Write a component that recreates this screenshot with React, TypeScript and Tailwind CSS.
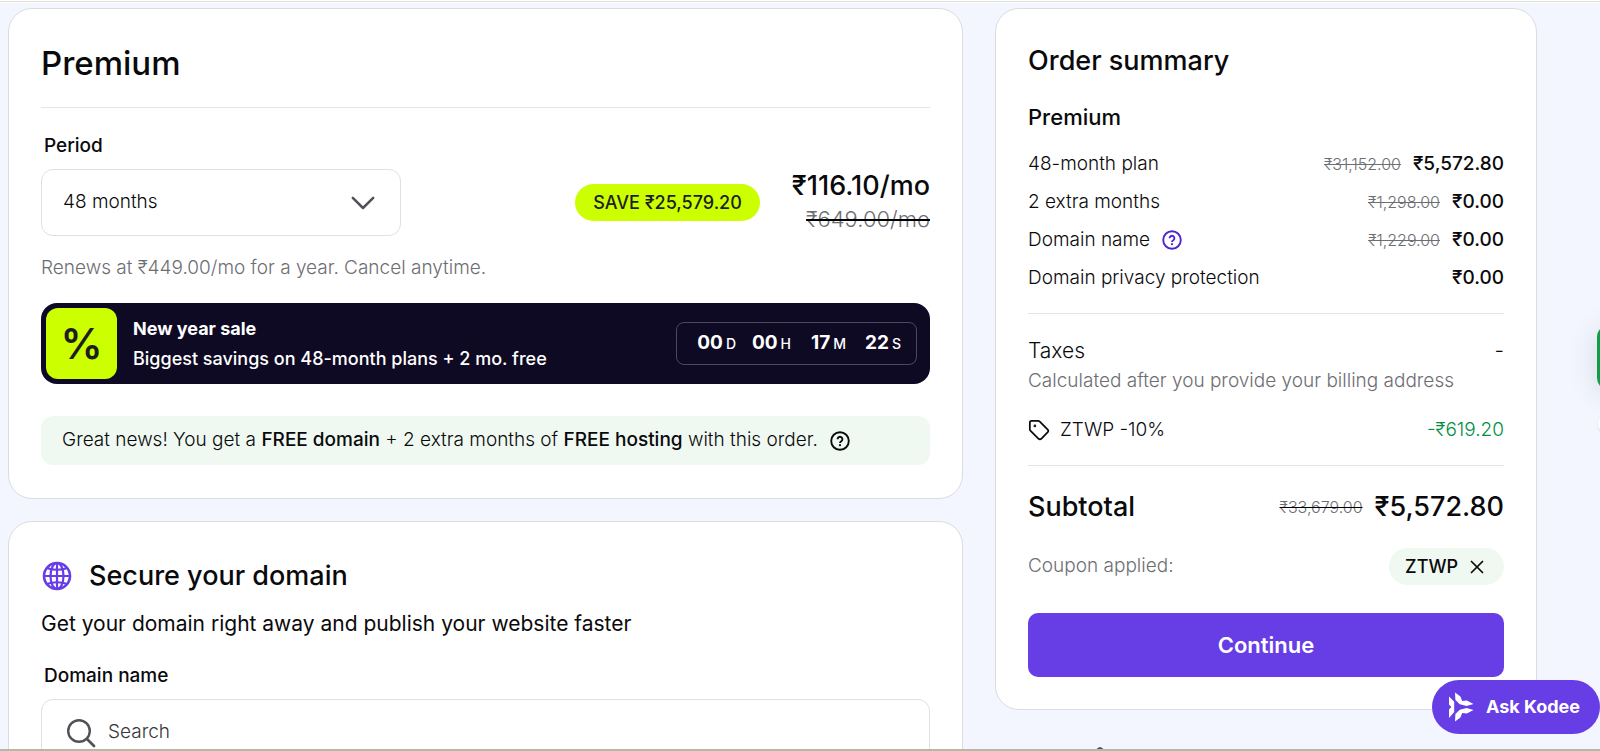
import { ReactNode } from 'react'
import { ShieldCheck, Tag, X } from 'lucide-react'

type Line = { name: string; old?: string; price: string; help?: boolean }

const lines: Line[] = [
    { name: '48-month plan', old: '₹31,152.00', price: '₹5,572.80' },
    { name: '2 extra months', old: '₹1,298.00', price: '₹0.00' },
    { name: 'Domain name', old: '₹1,229.00', price: '₹0.00', help: true },
    { name: 'Domain privacy protection', price: '₹0.00' },
]

const timer = [
    { value: '00', unit: 'D' },
    { value: '00', unit: 'H' },
    { value: '17', unit: 'M' },
    { value: '22', unit: 'S' },
]

function Card({ children, className = '' }: { children: ReactNode; className?: string }) {
    return (
        <section className={`rounded-3xl border border-[#dadce0] bg-white px-8 ${className}`}>
            {children}
        </section>
    )
}

function HelpIcon({ className = '' }: { className?: string }) {
    return (
        <svg viewBox="0 0 20 20" fill="none" stroke="currentColor" strokeWidth="1.9" className={`size-5 ${className}`}>
            <circle cx="10" cy="10" r="8.8" />
            <path d="M7.6 8.2a2.4 2.4 0 1 1 3.7 2c-.8.5-1.3.9-1.3 1.7" />
            <circle cx="10" cy="14.2" r="1.1" fill="currentColor" stroke="none" />
        </svg>
    )
}

function GlobeIcon() {
    return (
        <svg viewBox="0 0 32 32" fill="none" stroke="currentColor" strokeWidth="2.6" className="size-8 text-[#673de6]">
            <circle cx="16" cy="16" r="13" />
            <ellipse cx="16" cy="16" rx="6.5" ry="13" strokeWidth="2.2" />
            <path d="M16 3v26M3 16h26" strokeWidth="2.2" />
            <path d="M6 8c5 2.4 15 2.4 20 0M6 24c5-2.4 15-2.4 20 0" strokeWidth="2" />
        </svg>
    )
}

function ChevronIcon() {
    return (
        <svg viewBox="0 0 24 14" fill="none" stroke="currentColor" strokeWidth="2.5" strokeLinecap="round" strokeLinejoin="round" className="pointer-events-none absolute top-[27px] right-[26px] h-[14px] w-6 text-[#505259]">
            <path d="M1.8 1.8 12 12 22.2 1.8" />
        </svg>
    )
}

function SearchIcon() {
    return (
        <svg viewBox="0 0 30 30" fill="none" stroke="currentColor" strokeWidth="2.4" strokeLinecap="round" className="size-[30px] shrink-0 text-[#505259]">
            <circle cx="13" cy="13" r="10.8" />
            <path d="M21 21l7 7" strokeWidth="2.8" />
        </svg>
    )
}

function KodeeLogo() {
    return (
        <svg viewBox="0 0 26 30" fill="currentColor" className="h-[30px] w-[26px] shrink-0">
            <path d="M1 4.5 6.2 9.8V20L1 26V17.5L3.4 15 1 12.5z" />
            <path d="M7 .5 12.4 4.6 14.2 9 18.8 8.6 25.5 12 18.6 14 11.8 12.2 7.4 8z" />
            <path d="M7 29.5 12.4 25.4 14.2 21 18.8 21.4 25.5 18 18.6 16 11.8 17.8 7.4 22z" />
        </svg>
    )
}

function PromoBanner() {
    return (
        <div className="mt-[21px] flex items-center rounded-2xl bg-[#0f0a24] p-[5px] pr-[13px] text-white">
            <div className="flex size-[71px] shrink-0 items-center justify-center rounded-xl bg-[#ccff00] text-[42px] font-semibold text-[#1d1e20]">
                %
            </div>
            <div className="ml-4 text-lg leading-[30px]">
                <p className="font-bold">New year sale</p>
                <p className="font-medium">Biggest savings on 48-month plans + 2 mo. free</p>
            </div>
            <div className="ml-auto flex h-[43px] items-center rounded-lg border border-[#4b4860] pr-[15px] pl-1">
                {timer.map((t) => (
                    <div key={t.unit} className="flex w-[55px] items-baseline justify-end gap-[3px]">
                        <span className="text-[19px] font-bold">{t.value}</span>
                        <span className="text-sm font-medium">{t.unit}</span>
                    </div>
                ))}
            </div>
        </div>
    )
}

function PlanCard() {
    return (
        <Card className="pt-[34px] pb-[33px]">
            <h1 className="text-[33px] leading-10 font-medium">Premium</h1>
            <hr className="mt-6 border-[#e4e5e9]" />
            <label htmlFor="period" className="mt-6 block pl-[3px] text-[19px] leading-7 font-medium">Period</label>
            <div className="mt-[9px] flex items-center">
                <div className="relative w-[360px]">
                    <select id="period" className="h-[67px] w-full appearance-none rounded-xl border border-[#dfe0e4] bg-white px-[21px] text-[19px] font-light">
                        <option>48 months</option>
                        <option>24 months</option>
                        <option>12 months</option>
                        <option>1 month</option>
                    </select>
                    <ChevronIcon />
                </div>
                <span className="ml-auto rounded-full bg-[#ccff00] px-[18px] text-lg leading-[37px] font-medium text-[#1d1e20]">SAVE ₹25,579.20</span>
                <div className="ml-8 text-right">
                    <p className="text-[27px] leading-[34px] font-medium">₹116.10/mo</p>
                    <p className="text-[22px] leading-[33px] font-light text-[#6d6e73]"><s className="decoration-black">₹649.00/mo</s></p>
                </div>
            </div>
            <p className="mt-[18px] text-[19px] leading-7 font-light text-[#6d6e73]">Renews at ₹449.00/mo for a year. Cancel anytime.</p>
            <PromoBanner />
            <div className="mt-8 flex h-[49px] items-center rounded-xl bg-[#eff9f2] px-[21px] text-[19px] font-light">
                <p>Great news! You get a <b className="font-medium">FREE domain</b> + 2 extra months of <b className="font-medium">FREE hosting</b> with this order.</p>
                <HelpIcon className="ml-3" />
            </div>
        </Card>
    )
}

function DomainCard() {
    return (
        <Card className="mt-[22px] pt-[34px] pb-8">
            <div className="flex items-center">
                <GlobeIcon />
                <h2 className="ml-4 text-[27px] leading-10 font-medium">Secure your domain</h2>
            </div>
            <p className="mt-3 text-[21px] leading-8">Get your domain right away and publish your website faster</p>
            <label htmlFor="domain" className="mt-[22px] block pl-[3px] text-[19px] leading-7 font-medium">Domain name</label>
            <div className="mt-[9px] flex h-[67px] items-center rounded-xl border border-[#dfe0e4] pl-6">
                <SearchIcon />
                <input id="domain" type="text" placeholder="Search" className="ml-3 flex-1 text-[19px] font-light outline-none placeholder:text-[#36373b]" />
            </div>
        </Card>
    )
}

function OrderSummary() {
    return (
        <Card className="pt-8 pb-8">
            <h2 className="text-[27px] leading-10 font-medium">Order summary</h2>
            <h3 className="mt-5 text-[22px] leading-8 font-medium">Premium</h3>
            <ul className="mt-3 text-[19px] leading-[38px] font-light">
                {lines.map((line) => (
                    <li key={line.name} className="flex items-center">
                        <span>{line.name}</span>
                        {line.help && <HelpIcon className="ml-3 text-[#5025d1]" />}
                        {line.old && <s className="ml-auto text-base leading-[38px] text-[#6d6e73]">{line.old}</s>}
                        <span className={line.old ? 'ml-3 font-medium' : 'ml-auto font-medium'}>{line.price}</span>
                    </li>
                ))}
            </ul>
            <hr className="mt-4 border-[#e4e5e9]" />
            <div className="mt-[21px] flex justify-between text-[21px] leading-8 font-light">
                <span>Taxes</span>
                <span>-</span>
            </div>
            <p className="text-[19px] leading-7 font-light text-[#6d6e73]">Calculated after you provide your billing address</p>
            <div className="mt-[19px] flex items-center text-[19px] leading-8 font-light">
                <Tag className="size-[22px]" strokeWidth={1.9} />
                <span className="ml-[10px]">ZTWP -10%</span>
                <span className="ml-auto text-[#008f43]">-₹619.20</span>
            </div>
            <hr className="mt-[19px] border-[#e4e5e9]" />
            <div className="mt-[21px] flex items-center text-[27px] leading-10 font-medium">
                <span>Subtotal</span>
                <s className="ml-auto text-base font-light text-[#6d6e73] decoration-black">₹33,679.00</s>
                <span className="ml-3">₹5,572.80</span>
            </div>
            <div className="mt-[21px] flex items-center justify-between text-[19px]">
                <span className="font-light text-[#6d6e73]">Coupon applied:</span>
                <span className="flex h-[37px] items-center gap-2 rounded-full bg-[#eff9f2] px-4 text-lg font-medium">
                    ZTWP
                    <button type="button" aria-label="Remove coupon"><X className="size-[22px]" strokeWidth={1.9} /></button>
                </span>
            </div>
            <button type="button" className="mt-7 h-16 w-full rounded-[10px] bg-[#673de6] text-[22px] font-semibold text-white">Continue</button>
        </Card>
    )
}

function App() {
    return (
        <div className="relative h-screen overflow-hidden border-b-2 border-[#b4b8a4] bg-[#f3f6ff] font-['Inter',sans-serif] text-[#0a0a0c]">
            <div className="h-[3px] border-y border-white bg-[#dfe0d8]" />
            <main className="grid grid-cols-[minmax(0,1fr)_542px] items-start gap-8 pt-[5px] pr-[63px] pl-2">
                <div>
                    <PlanCard />
                    <DomainCard />
                </div>
                <div>
                    <OrderSummary />
                    <ShieldCheck className="mt-9 ml-[93px] size-6 text-[#505259]" />
                </div>
            </main>
            <div className="absolute top-[325px] -right-[61px] h-[65px] w-16 rounded-xl bg-[#0f9d4a] shadow-[0_4px_30px_rgba(0,0,0,0.12)]" />
            <div className="absolute top-[414px] -right-[18px] size-5 rounded-full bg-white shadow" />
            <button type="button" className="absolute right-0 bottom-[15px] flex h-[54px] items-center rounded-full bg-[#673de6] pr-5 pl-4 text-lg font-bold text-white">
                <KodeeLogo />
                <span className="ml-3">Ask Kodee</span>
            </button>
        </div>
    )
}

export default App
